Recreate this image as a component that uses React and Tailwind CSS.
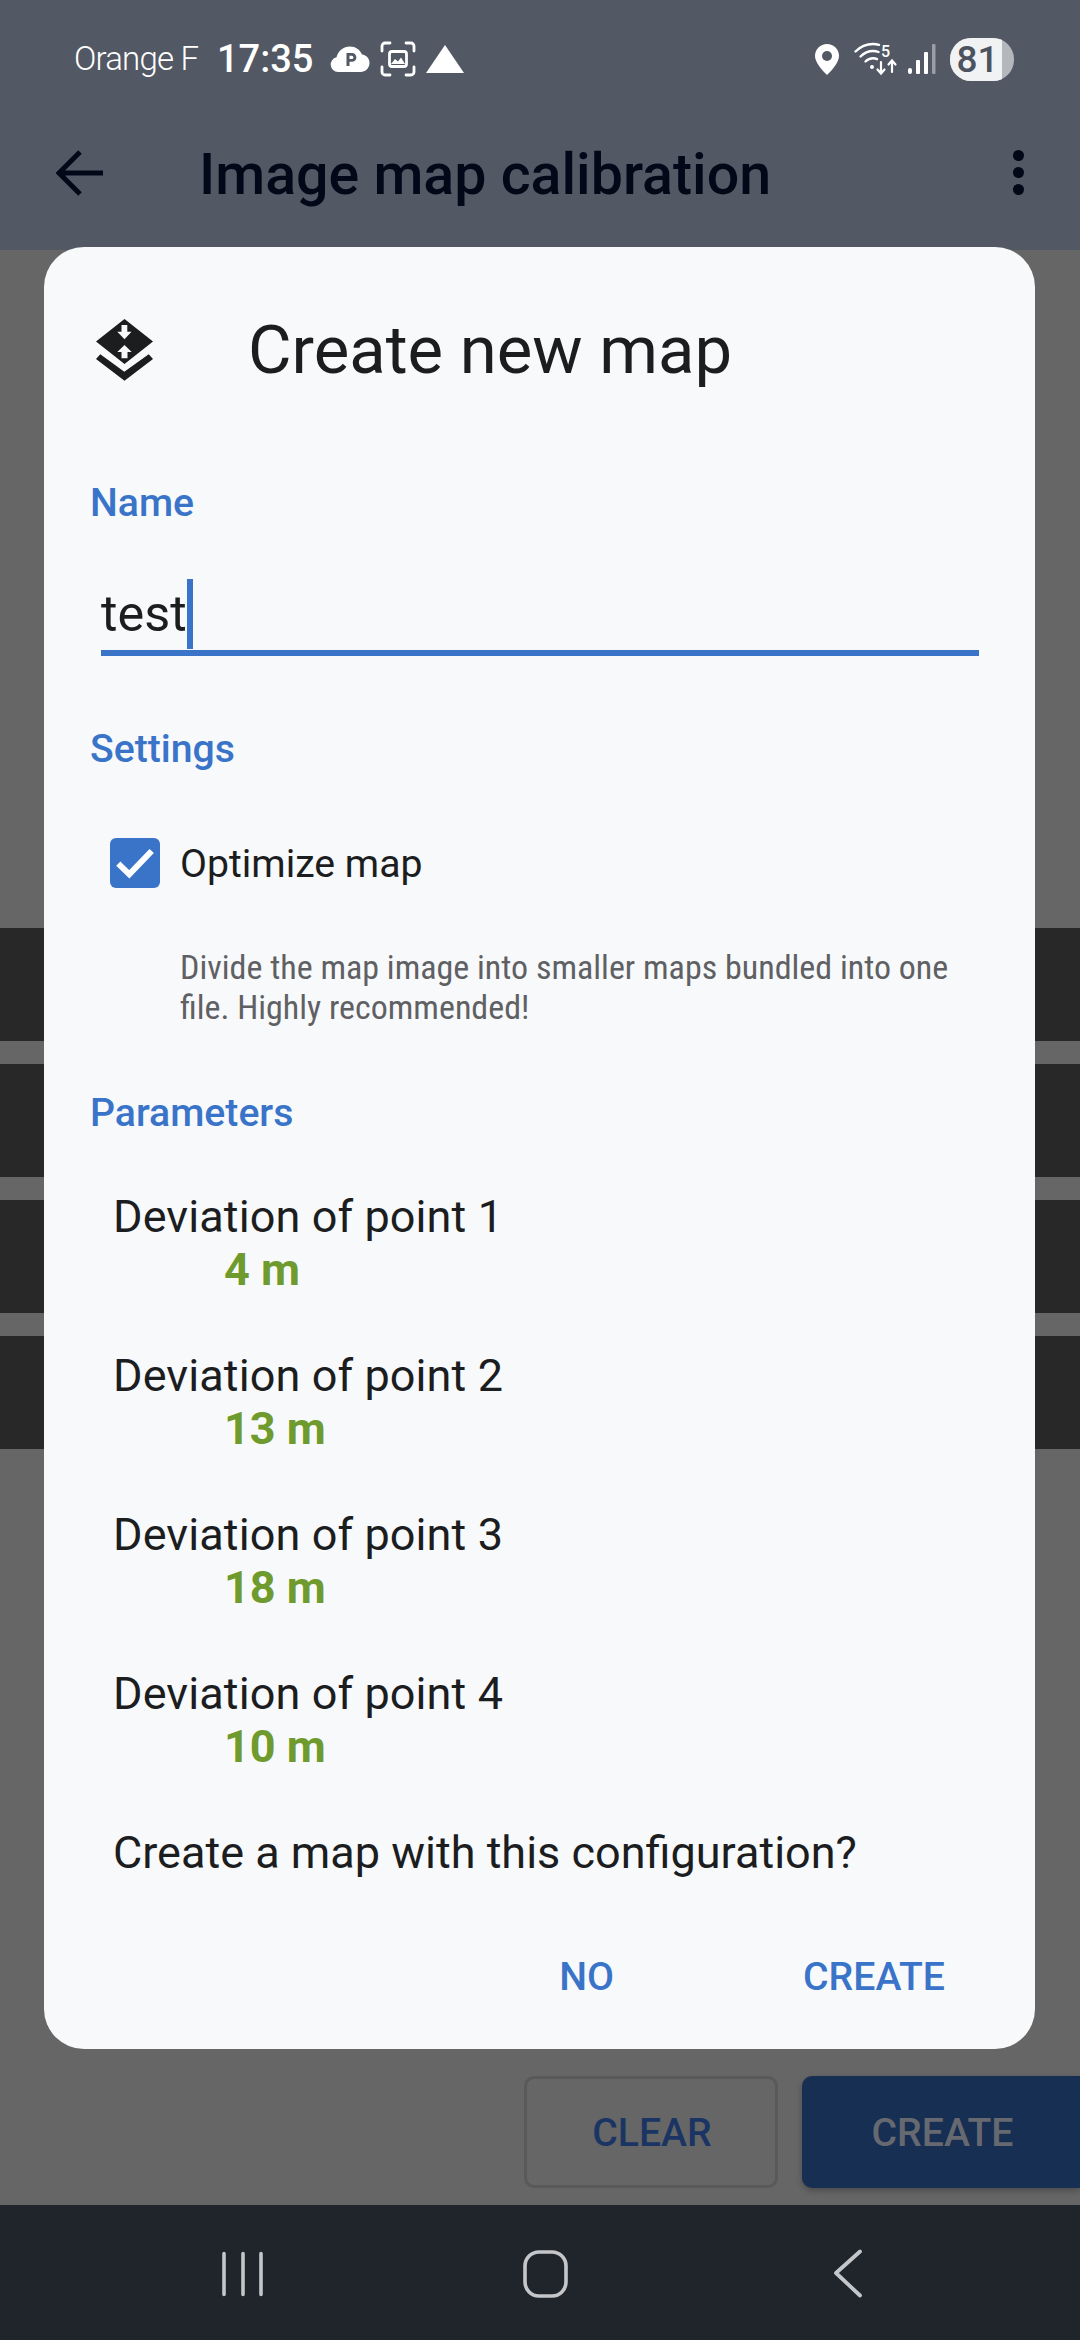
const ROBOTO = { fontFamily: "Roboto, sans-serif" };

function Cloud() {
  return (
    <svg width="40" height="28" viewBox="0 0 40 28">
      <path d="M8 27a7.5 7.5 0 0 1-1.5-14.8C8 6 13.500 1.500 20 1.500c5.500 0 10 3 12 8 4.500.5 7.500 4 7.500 8.500 0 5-4 9-9 9z" fill="#fff" />
      <path d="M16.500 21V8h5.500a4.300 4.300 0 0 1 0 8.800h-2.500V21z M19.500 10.800v3.200h2.300a1.600 1.600 0 0 0 0-3.200z" fill="#525965" fillRule="evenodd" />
    </svg>
  );
}

function FrameIcon() {
  return (
    <svg width="36" height="36" viewBox="0 0 36 36" fill="none" stroke="#fff" strokeWidth="2.800" strokeLinecap="round">
      <path d="M2 10V5a3 3 0 0 1 3-3h5M26 2h5a3 3 0 0 1 3 3v5M34 26v5a3 3 0 0 1-3 3h-5M10 34H5a3 3 0 0 1-3-3v-5" />
      <rect x="9.500" y="10.500" width="17" height="15" rx="2.500" />
      <path d="M11 23l4-5 3 2.500 3-4 4 6.500z" fill="#fff" stroke="none" />
    </svg>
  );
}

function Triangle() {
  return (
    <svg width="38" height="28" viewBox="0 0 38 28">
      <path d="M19 0L38 28H0z" fill="#fff" />
    </svg>
  );
}

function Pin() {
  return (
    <svg width="24" height="31" viewBox="0 0 24 31">
      <path d="M12 0C5.400 0 0 5.200 0 11.800 0 18 6 25.500 12 31c6-5.500 12-13 12-19.200C24 5.200 18.600 0 12 0z" fill="#fff" />
      <circle cx="12" cy="12" r="5" fill="#525965" />
    </svg>
  );
}

function Wifi() {
  return (
    <svg width="44" height="34" viewBox="0 0 44 34" fill="none" stroke="#fff" strokeLinecap="round">
      <path d="M1.500 9.500C7 4 13 2 19 2c2 0 4 .2 6 .8" strokeWidth="2.400" />
      <path d="M6.500 14.500C10 11 14.500 9 19 9c2 0 4 .4 5.500 1" strokeWidth="2.400" />
      <path d="M11.500 19.500c2-2 4.500-3.200 7.500-3.200 1.500 0 3 .3 4 .8" strokeWidth="2.400" />
      <circle cx="18" cy="25" r="2" fill="#fff" stroke="none" />
      <path d="M27 20v11M23.500 27.500L27 31.500l3.500-4" strokeWidth="2.200" />
      <path d="M38 30V19M34.500 22.500L38 18.500l3.500 4" strokeWidth="2.200" />
      <text x="27" y="14.500" fill="#fff" stroke="none" fontSize="16" fontFamily="Roboto, sans-serif" fontWeight="500">5</text>
    </svg>
  );
}

function Signal() {
  return (
    <svg width="28" height="30" viewBox="0 0 28 30" fill="#fff">
      <rect x="0" y="24" width="4" height="6" rx="2" />
      <rect x="8" y="16" width="4" height="14" rx="1" />
      <rect x="16" y="8" width="4" height="22" rx="1" />
      <rect x="24" y="0" width="3.500" height="30" rx="1" fill="#9a9ea5" />
    </svg>
  );
}

function Battery() {
  return (
    <div className="relative flex h-[43px] w-[64px] items-center overflow-hidden rounded-[21px] bg-[#b4b7bb]">
      <div className="flex h-full w-[52px] items-center justify-center bg-[#f1f2f3] pl-[3px] text-[37px] font-medium leading-none text-[#4d535e]">81</div>
    </div>
  );
}

function MapIcon() {
  return (
    <svg width="57" height="62" viewBox="0 0 57 62">
      <path
        fillRule="evenodd"
        fill="#1c1d1f"
        d="M28.500 0L57 22.500 28.500 45 0 22.500z M25.500 6v6.700h-4.200l7.200 7.600 7-7.600h-4.200V6z M28.500 26l-7.200 7h4.200v6.300h6V33h4.200z"
      />
      <path fill="#1c1d1f" d="M0 40l4.300-4.700 24 17.400L52.700 35.300 57 40 28.500 61.700z" />
    </svg>
  );
}

function Deviation({ n, value }) {
  return (
    <div className="flex h-[159px] flex-col">
      <div className="h-[53px] text-[45px] leading-[53px] tracking-[0.1px] text-[#1c1d1f]">Deviation of point {n}</div>
      <div className="ml-[111px] h-[53px] text-[45px] font-bold leading-[53px] text-[#6f9a2e]">{value}</div>
    </div>
  );
}

function DarkRow() {
  return <div className="h-[113px] bg-[#282828]" />;
}

export default function App() {
  return (
    <div className="relative flex h-[2340px] w-[1080px] flex-col overflow-hidden bg-[#666666]" style={ROBOTO}>
      <header className="flex h-[250px] flex-col bg-[#525965]">
        <div className="flex h-[120px] items-center pl-[74px] pr-[66px] pb-[2px]">
          <span className="w-[143px] text-[33px] font-light tracking-[-0.8px] text-white">Orange F</span>
          <span className="w-[113px] text-[38px] font-medium leading-none text-white">17:35</span>
          <Cloud />
          <span className="ml-[10px] flex"><FrameIcon /></span>
          <span className="ml-[10px] flex"><Triangle /></span>
          <div className="ml-auto flex items-center">
            <Pin />
            <span className="ml-[15px] flex"><Wifi /></span>
            <span className="ml-[10px] flex"><Signal /></span>
            <span className="ml-[14px] flex"><Battery /></span>
          </div>
        </div>
        <div className="flex h-[110px] items-center pb-[5px]">
          <svg className="ml-[56px]" width="48" height="48" viewBox="0 0 48 48" fill="none" stroke="#020817" strokeWidth="5">
            <path d="M47 24H4M24 3L3 24l21 21" />
          </svg>
          <h1 className="ml-[95px] translate-y-[2px] text-[57.3px] font-medium leading-none text-[#020817]">Image map calibration</h1>
          <div className="ml-auto mr-[56px] flex flex-col gap-[6px]">
            <span className="h-[11px] w-[11px] rounded-full bg-[#020817]" />
            <span className="h-[11px] w-[11px] rounded-full bg-[#020817]" />
            <span className="h-[11px] w-[11px] rounded-full bg-[#020817]" />
          </div>
        </div>
      </header>

      <main className="flex flex-1 flex-col bg-[#666666]">
        <div className="flex flex-col gap-[23px] pt-[678px]">
          <DarkRow />
          <DarkRow />
          <DarkRow />
          <DarkRow />
        </div>
        <div className="mt-auto flex justify-end gap-[24px] pb-[17px]">
          <button className="flex h-[112px] w-[254px] items-center justify-center rounded-[10px] border-[3px] border-[#595959] pl-[2px] pt-[3px] text-[39.2px] font-medium text-[#1a3563]">CLEAR</button>
          <button className="flex h-[112px] w-[278px] items-center justify-center rounded-l-[10px] bg-[#182f54] pl-[3px] pt-[3px] text-[39.2px] font-medium text-[#666a70] shadow-[0_3px_6px_rgba(0,0,0,0.25)]">CREATE</button>
        </div>
      </main>

      <nav className="flex h-[135px] items-center justify-center bg-[#20242b] pb-[2px]">
        <svg width="700" height="56" viewBox="0 0 700 56" fill="none" stroke="#c4c6c9" strokeLinecap="round">
          <path d="M34 9.500v41M53 9.500v41M71 9.500v41" strokeWidth="3.600" />
          <rect x="335" y="8" width="41" height="44" rx="14" strokeWidth="3.600" />
          <path d="M670 7.500l-24 21.500 24 22.500" strokeWidth="3.800" strokeLinejoin="round" />
        </svg>
      </nav>

      <section className="absolute left-[44px] top-[247px] flex h-[1802px] w-[991px] flex-col rounded-[40px] bg-[#f7f9fb]">
        <div className="flex h-[212px] items-center pb-[6px]">
          <span className="ml-[52px] flex h-[62px] w-[57px]"><MapIcon /></span>
          <h2 className="ml-[95px] text-[67px] leading-none text-[#1c1d1f]">Create new map</h2>
        </div>
        <div className="flex h-[90px] items-center pl-[46px] text-[39.2px] font-medium leading-none text-[#3a74c9]">Name</div>
        <div className="ml-[57px] mr-[56px] mt-[22px] flex h-[85px] items-start border-b-[6px] border-[#3a74c9] pt-[8px]">
          <span className="text-[50.4px] leading-[70px] text-[#1c1d1f]">test</span>
          <span className="h-[70px] w-[6px] bg-[#3a74c9]" />
        </div>
        <div className="mt-[49px] flex h-[90px] items-center pl-[46px] text-[39.2px] font-medium leading-none text-[#3a74c9]">Settings</div>
        <div className="mt-[41px] flex h-[54px] items-center pl-[66px]">
          <span className="flex h-[50px] w-[50px] items-center justify-center rounded-[6px] bg-[#3a74c9]">
            <svg width="50" height="50" viewBox="0 0 50 50" fill="none" stroke="#fff" strokeWidth="6">
              <path d="M8.300 25.700l11 10.600L41.700 13" />
            </svg>
          </span>
          <span className="ml-[20px] translate-y-[2px] text-[39.2px] leading-none text-[#1c1d1f]">Optimize map</span>
        </div>
        <p className="ml-[136px] mt-[57px] w-[790px] text-[34px] leading-[40px] font-stretch-condensed text-[#5f6063]">
          Divide the map image into smaller maps bundled into one file. Highly recommended!
        </p>
        <div className="mt-[42px] flex h-[90px] items-center pl-[46px] text-[39.2px] font-medium leading-none text-[#3a74c9]">Parameters</div>
        <div className="mt-[31px] flex flex-col pl-[69px]">
          <Deviation n={1} value="4 m" />
          <Deviation n={2} value="13 m" />
          <Deviation n={3} value="18 m" />
          <Deviation n={4} value="10 m" />
          <div className="h-[53px] text-[45px] leading-[53px] text-[#1c1d1f]">Create a map with this configuration?</div>
        </div>
        <div className="mt-[79px] flex items-center justify-end pr-[90px] text-[39.2px] font-medium leading-none text-[#3a74c9]">
          <span>NO</span>
          <span className="ml-[189px]">CREATE</span>
        </div>
      </section>
    </div>
  );
}
